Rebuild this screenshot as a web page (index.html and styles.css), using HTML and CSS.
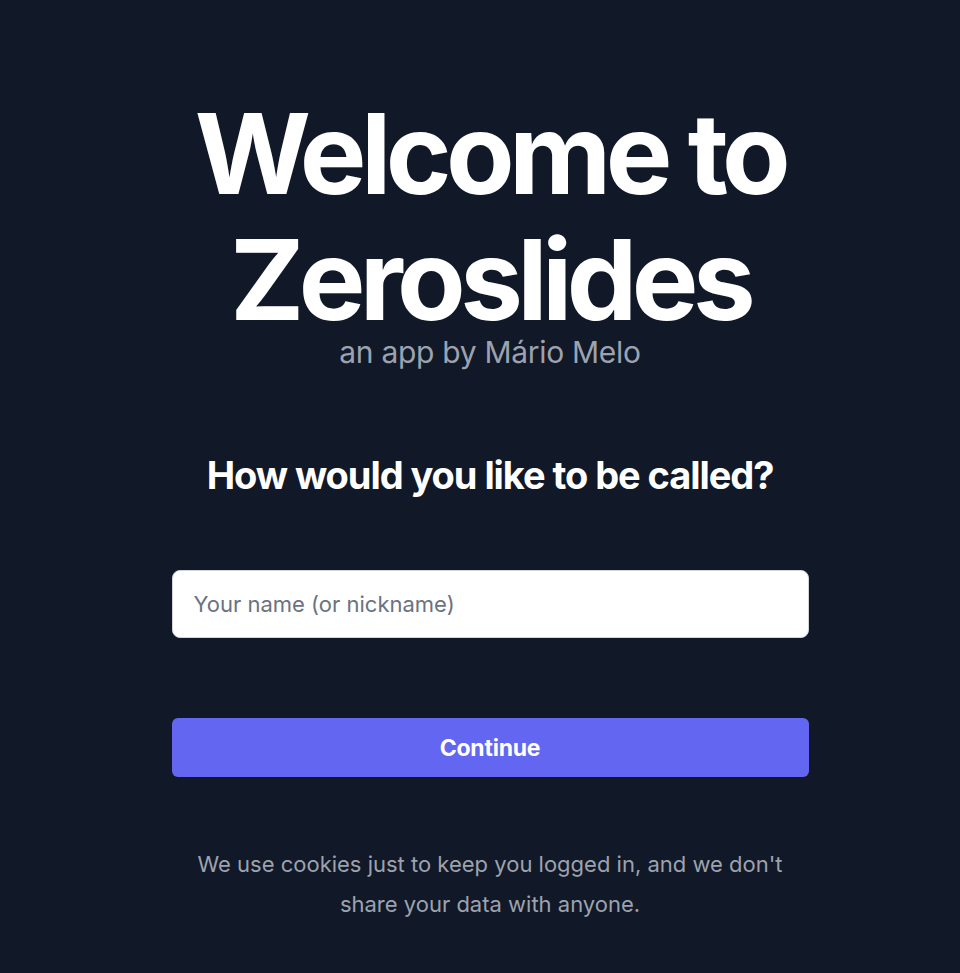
FILE: index.html
```html
<!DOCTYPE html>
<html lang="en">
<head>
<meta charset="utf-8">
<title>Zeroslides</title>
<link rel="stylesheet" href="styles.css">
</head>
<body>
<main class="page">
  <section class="hero">
    <h1 class="title">Welcome to Zeroslides</h1>
    <p class="subtitle">an app by Mário Melo</p>
  </section>
  <form class="form">
    <h2 class="question">How would you like to be called?</h2>
    <input class="name-input" type="text" placeholder="Your name (or nickname)">
    <button class="continue" type="button">Continue</button>
    <p class="note">We use cookies just to keep you logged in, and we don't share your data with anyone.</p>
  </form>
</main>
</body>
</html>
```
FILE: styles.css
```css
html, body {
  margin: 0;
  padding: 0;
  background: #111827;
  height: 100%;
}
body {
  font-family: Inter, "Liberation Sans", sans-serif;
  color: #ffffff;
}
.page {
  display: flex;
  flex-direction: column;
  align-items: center;
  padding-left: 20px;
  padding-top: 90px;
  box-sizing: border-box;
  min-height: 100%;
}
.hero {
  display: flex;
  flex-direction: column;
  align-items: center;
  text-align: center;
}
.title {
  margin: 0;
  font-size: 112px;
  line-height: 126px;
  font-weight: 700;
  letter-spacing: -0.05em;
  width: 700px;
}
.subtitle {
  margin: 0;
  font-size: 30px;
  line-height: 20px;
  color: #9ca3af;
  letter-spacing: -0.01em;
}
.form {
  display: flex;
  flex-direction: column;
  align-items: stretch;
  width: 637px;
  margin-top: 93px;
}
.question {
  margin: 0;
  text-align: center;
  font-size: 38px;
  line-height: 40px;
  font-weight: 700;
  letter-spacing: -0.028em;
}
.name-input {
  margin-top: 75px;
  height: 68px;
  box-sizing: border-box;
  border: 1px solid #d1d5db;
  border-radius: 8px;
  background: #ffffff;
  padding: 0 21px;
  font-family: inherit;
  font-size: 22px;
  color: #111827;
  outline: none;
}
.name-input::placeholder {
  color: #6b7280;
}
.continue {
  margin-top: 80px;
  height: 59px;
  border: none;
  border-radius: 6px;
  background: #6366f1;
  color: #ffffff;
  font-family: inherit;
  font-size: 23px;
  font-weight: 700;
  letter-spacing: -0.01em;
  cursor: pointer;
}
.note {
  margin: 67px 0 0;
  text-align: center;
  font-size: 22px;
  line-height: 40px;
  color: #9ca3af;
  padding: 0 20px;
}
```
